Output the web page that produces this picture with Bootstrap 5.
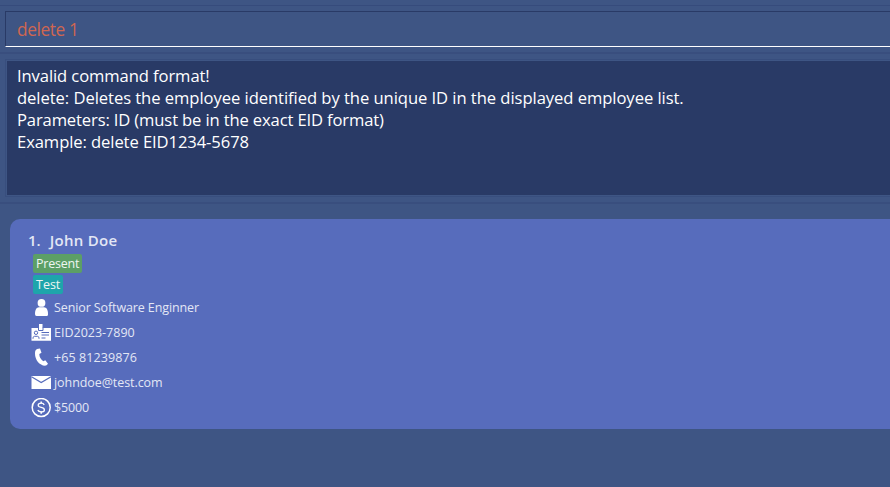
<!DOCTYPE html>
<html lang="en">
<head>
<meta charset="utf-8">
<title>Employees</title>
<link href="https://cdn.jsdelivr.net/npm/bootstrap@5.3.0/dist/css/bootstrap.min.css" rel="stylesheet">
<style>
body{background:#3e5584;font-family:"Open Sans","Noto Sans",sans-serif;height:487px;overflow:hidden}
.rule-top{height:6px;border-bottom:1px solid #364b7c}
.rule-pane{height:2px;background:#394e7e}
.command-box{height:36px;margin:5px 0 5px 5px;padding-left:11px;border:1px solid #293a66;border-right:0;border-bottom:1px solid #fff;color:#d06651;font-size:17.3px;line-height:35px;letter-spacing:-.38px}
.result-frame{margin:5px 0 5px 5px;border:1px solid #384e7e;border-right:0;padding:1px 0 1px 1px}
.result-box{height:134px;background:#293a66;color:#fff;font-size:16.6px;line-height:22px;padding:4px 0 0 10px}
.result-box div,.command-box span,.employee-card .fit{white-space:nowrap}
.result-box div:nth-child(1){letter-spacing:-.1px}
.result-box div:nth-child(2){letter-spacing:-.058px}
.result-box div:nth-child(3){letter-spacing:-.14px}
.result-box div:nth-child(4){letter-spacing:-.09px}
.employee-card{margin:15px 0 0 10px;height:210px;background:#576cbc;border-radius:10px 0 0 10px;padding:11px 0 0 18px;color:#e3e7f5;font-size:12.5px}
.person-name{height:22px;line-height:21px;font-size:15px;font-weight:600;gap:9px}
.person-name .full{letter-spacing:.3px}
.tag{height:19px;line-height:19px;padding:0 3px;border-radius:2px;margin:2px 0 0 5px;color:#eef6f2}
.tag-present{background:#5c9f66;width:49px;letter-spacing:-.2px}
.tag-test{background:#1ea5ab;width:30px}
.info-list{padding-top:1px}
.info-row{height:25px;line-height:25px;gap:3px}
.info-row svg{width:20px;height:20px;margin:1px 0 0 3px;flex:none}
.role{letter-spacing:-.11px}
.phone{letter-spacing:.09px}
.email{letter-spacing:-.07px}
.salary{letter-spacing:-.15px}
</style>
<script src="https://cdn.jsdelivr.net/npm/bootstrap@5.3.0/dist/js/bootstrap.bundle.min.js"></script>
</head>
<body>
<main class="d-flex flex-column">
<div class="rule-top"></div>
<div class="command-box"><span>delete 1</span></div>
<div class="rule-pane"></div>
<div class="result-frame"><div class="result-box">
<div>Invalid command format!</div>
<div>delete: Deletes the employee identified by the unique ID in the displayed employee list.</div>
<div>Parameters: ID (must be in the exact EID format)</div>
<div>Example: delete EID1234-5678</div>
</div></div>
<div class="rule-pane"></div>
<section class="employee-card">
<div class="person-name d-flex"><span>1.</span><span class="full">John Doe</span></div>
<div class="d-flex flex-column align-items-start">
<span class="tag tag-present"><span class="fit">Present</span></span>
<span class="tag tag-test"><span class="fit">Test</span></span>
</div>
<div class="info-list">
<div class="info-row d-flex align-items-center"><svg viewBox="0 0 20 20" fill="#fff"><circle cx="10.5" cy="4.900" r="3.900"/><path d="M4 16C4 11.500 5.500 9.500 8 9.200h5c2.500.3 4 2.300 4 6.800 0 1.500-.5 2-1.500 2h-10Q4 18 4 16z"/></svg><span class="fit role">Senior Software Enginner</span></div>
<div class="info-row d-flex align-items-center"><svg viewBox="0 0 20 20"><path d="M.5 5H8V1h3.500v4H20V17.800H.5z" fill="#fff"/><path d="M7.500 4.500v3h4.500v-3M10.500 9.500H18M10.500 12H18M10.500 15H14.500M2 15.800v-1.500l1.500-1h3l1.500 1v1.500" fill="none" stroke="#576cbc"/><circle cx="5" cy="9.800" r="1.700" fill="none" stroke="#576cbc"/></svg><span class="fit">EID2023-7890</span></div>
<div class="info-row d-flex align-items-center"><svg viewBox="0 0 20 20" fill="#fff"><path d="M6 1l3-.5 1.500 4.200L8.300 6c0 3 1.500 5.500 4 7.200l2-1L17 15.800c-.8 1.200-2 1.900-3 1.900C8.500 17.500 4 12 4 5.500 4 3 4.700 1.800 6 1z"/></svg><span class="fit phone">+65 81239876</span></div>
<div class="info-row d-flex align-items-center"><svg viewBox="0 0 20 20"><path d="M.5 3H20v13H.5z" fill="#fff"/><path d="M.5 3.800l9.700 5.800L20 3.800" fill="none" stroke="#576cbc" stroke-width="1.200"/></svg><span class="fit email">johndoe@test.com</span></div>
<div class="info-row d-flex align-items-center"><svg viewBox="0 0 20 20" fill="none" stroke="#fff" stroke-width="1.500"><circle cx="10.200" cy="9.500" r="9"/><path d="M13.200 7Q12.500 5.200 10.200 5.200 7.200 5.200 7.200 7.300 7.200 8.900 10.200 9.400q3.200.5 3.200 2.500 0 2-3.200 2-2.700 0-3.400-1.900" stroke-width="1.300"/><path d="M10.200 3.500v2M10.200 13.500v2.200"/></svg><span class="fit salary">$5000</span></div>
</div>
</section>
</main>
</body>
</html>
